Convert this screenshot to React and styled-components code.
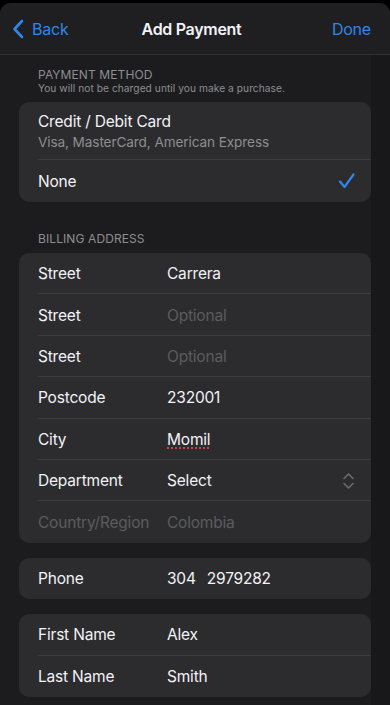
import React from "react";
import styled, { createGlobalStyle } from "styled-components";

const Global = createGlobalStyle`
  html, body { margin: 0; padding: 0; background: #000; }
  body { font-family: Inter, "Noto Sans", "Liberation Sans", sans-serif; -webkit-font-smoothing: antialiased; }
  * { box-sizing: border-box; }
`;

const Screen = styled.div`
  width: 390px;
  height: 705px;
  overflow: hidden;
  background: #000;
  padding-top: 3px;
`;

const Sheet = styled.div`
  height: 702px;
  border-radius: 11px 11px 0 0;
  overflow: hidden;
  background: #1c1c1e;
  display: flex;
  flex-direction: column;
`;

const NavBar = styled.div`
  height: 52px;
  flex: none;
  display: grid;
  grid-template-columns: 1fr auto 1fr;
  align-items: center;
  padding: 0 19px 0 12px;
  background: #1f1f21;
  border-bottom: 1px solid #313133;
`;

const NavButton = styled.div`
  display: flex;
  align-items: center;
  gap: 8px;
  color: #2e87e8;
  font-size: 16px;
  letter-spacing: -0.2px;
  justify-self: ${(p) => (p.$right ? "end" : "start")};
`;

const Title = styled.div`
  color: #f2f2f7;
  font-size: 16px;
  font-weight: 600;
  letter-spacing: -0.3px;
`;

const Content = styled.div`
  flex: 1;
  padding: 12px 19px 0 19px;
  background: linear-gradient(to right, #1c1c1e 371px, #18181a 371px);
  display: flex;
  flex-direction: column;
`;

const SectionHeader = styled.div`
  padding: 0 19px;
  margin-top: ${(p) => p.$top || 0}px;
  margin-bottom: 7px;
  color: #8d8d92;
  font-size: 12px;
  letter-spacing: 0.1px;
  line-height: 15px;
  text-transform: uppercase;
`;

const SectionNote = styled.div`
  color: #8d8d92;
  font-size: 10.2px;
  line-height: 13px;
  text-transform: none;
  letter-spacing: 0.05px;
`;

const Card = styled.div`
  background: #2c2c2e;
  border-radius: 10px;
  overflow: hidden;
  margin-bottom: ${(p) => p.$mb || 0}px;
`;

const Row = styled.div`
  position: relative;
  height: ${(p) => p.$h || 41.4}px;
  display: flex;
  align-items: center;
  padding: 0 16px 0 19px;
  &:not(:last-child)::after {
    content: "";
    position: absolute;
    left: 19px;
    right: 0;
    bottom: 0;
    height: 1px;
    background: #3c3c3f;
  }
`;

const Stack = styled.div`
  display: flex;
  flex-direction: column;
  gap: 3px;
  flex: 1;
`;

const Primary = styled.div`
  flex: ${(p) => (p.$grow ? 1 : "none")};
  color: #f2f2f7;
  font-size: 15.5px;
  letter-spacing: -0.2px;
`;

const Secondary = styled.div`
  color: #8d8d92;
  font-size: 13.6px;
  letter-spacing: -0.1px;
`;

const Label = styled.div`
  width: 129px;
  flex: none;
  color: ${(p) => (p.$dim ? "#5b5b5f" : "#f2f2f7")};
  font-size: 15.5px;
  letter-spacing: -0.2px;
  white-space: nowrap;
`;

const Value = styled.div`
  flex: 1;
  display: flex;
  gap: 11px;
  color: ${(p) => (p.$placeholder ? "#5b5b5f" : "#f2f2f7")};
  font-size: 15.5px;
  letter-spacing: -0.2px;
  white-space: pre;
`;

const Misspelled = styled.span`
  text-decoration: underline dotted #c4424a;
  text-decoration-thickness: 1.5px;
  text-underline-offset: 3px;
`;

const BackChevron = () => (
  <svg width="12" height="20" viewBox="0 0 12 20" fill="none">
    <path d="M10 2 L2.5 10 L10 18" stroke="#2e87e8" strokeWidth="2.6" strokeLinecap="round" strokeLinejoin="round" />
  </svg>
);

const Check = () => (
  <svg width="17" height="16" viewBox="0 0 17 16" fill="none">
    <path d="M2 8.5 L6.5 14 L15.5 1.5" stroke="#2e87e8" strokeWidth="2.2" strokeLinecap="round" strokeLinejoin="round" />
  </svg>
);

const UpDown = () => (
  <svg width="13" height="18" viewBox="0 0 13 18" fill="none">
    <path d="M2 6.5 L6.5 2 L11 6.5 M2 11.5 L6.5 16 L11 11.5" stroke="#6c6c70" strokeWidth="1.6" strokeLinecap="round" strokeLinejoin="round" />
  </svg>
);

const billing = [
  { label: "Street", value: "Carrera" },
  { label: "Street", value: "Optional", placeholder: true },
  { label: "Street", value: "Optional", placeholder: true },
  { label: "Postcode", value: "232001" },
  { label: "City", value: "Momil", misspelled: true },
  { label: "Department", value: "Select", select: true },
  { label: "Country/Region", value: "Colombia", dim: true },
];

export default function App() {
  return (
    <>
      <Global />
      <Screen>
        <Sheet>
          <NavBar>
            <NavButton>
              <BackChevron />
              Back
            </NavButton>
            <Title>Add Payment</Title>
            <NavButton $right>Done</NavButton>
          </NavBar>
          <Content>
            <SectionHeader>
              Payment Method
              <SectionNote>You will not be charged until you make a purchase.</SectionNote>
            </SectionHeader>
            <Card>
              <Row $h={58}>
                <Stack>
                  <Primary>Credit / Debit Card</Primary>
                  <Secondary>Visa, MasterCard, American Express</Secondary>
                </Stack>
              </Row>
              <Row $h={42}>
                <Primary $grow>None</Primary>
                <Check />
              </Row>
            </Card>

            <SectionHeader $top={29}>Billing Address</SectionHeader>
            <Card $mb={15}>
              {billing.map((r, i) => (
                <Row key={i}>
                  <Label $dim={r.dim}>{r.label}</Label>
                  <Value $placeholder={r.placeholder || r.dim}>
                    {r.misspelled ? <Misspelled>{r.value}</Misspelled> : r.value}
                  </Value>
                  {r.select && <UpDown />}
                </Row>
              ))}
            </Card>

            <Card $mb={15}>
              <Row $h={41.5}>
                <Label>Phone</Label>
                <Value>
                  <span>304</span>
                  <span>2979282</span>
                </Value>
              </Row>
            </Card>

            <Card>
              <Row $h={41.5}>
                <Label>First Name</Label>
                <Value>Alex</Value>
              </Row>
              <Row $h={41.5}>
                <Label>Last Name</Label>
                <Value>Smith</Value>
              </Row>
            </Card>
          </Content>
        </Sheet>
      </Screen>
    </>
  );
}
